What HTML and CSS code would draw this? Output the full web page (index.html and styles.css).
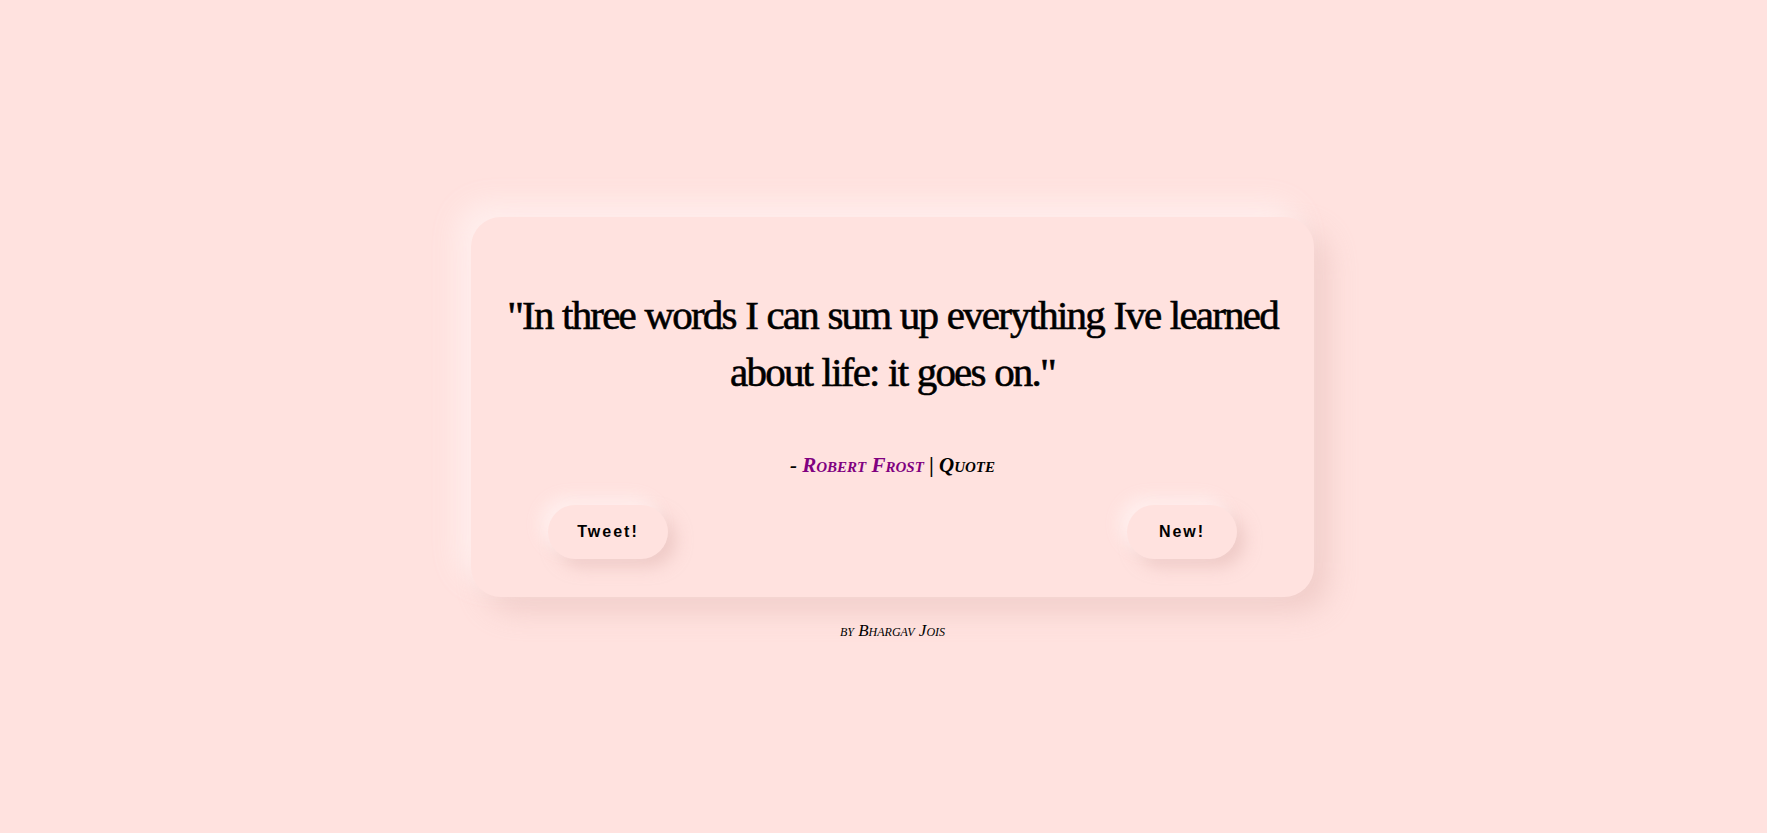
FILE: index.html
```html
<!DOCTYPE html>
<html lang="en">
<head>
<meta charset="utf-8">
<title>Random Quote</title>
<link rel="stylesheet" href="styles.css">
</head>
<body>
<main class="page">
  <section class="card">
    <p class="quote">"In three words I can sum up everything Ive learned about life: it goes on."</p>
    <p class="author">- <span class="author-name">Robert Frost</span> | Quote</p>
    <div class="actions">
      <button class="btn btn-tweet">Tweet!</button>
      <button class="btn btn-new">New!</button>
    </div>
  </section>
  <p class="byline">by Bhargav Jois</p>
</main>
</body>
</html>
```

FILE: styles.css
```css
html, body {
  margin: 0;
  padding: 0;
}

body {
  background: #ffe2df;
  color: #000;
  font-family: "Liberation Serif", "Times New Roman", serif;
  min-height: 100vh;
}

.page {
  display: flex;
  flex-direction: column;
  align-items: center;
  padding-top: 217px;
  padding-left: 18px;
}

.card {
  box-sizing: border-box;
  width: 843px;
  height: 380px;
  border-radius: 30px;
  background: #ffe2df;
  box-shadow: -14px -14px 28px rgba(255, 240, 238, 0.9),
              14px 14px 28px rgba(224, 180, 176, 0.45);
  display: flex;
  flex-direction: column;
  align-items: center;
  padding: 70px 20px 38px;
}

.quote {
  margin: 0;
  max-width: 795px;
  font-size: 41px;
  line-height: 57px;
  text-align: center;
  letter-spacing: -1.8px;
  word-spacing: 1px;
  -webkit-text-stroke: 0.6px #000;
}

.author {
  margin: 52px 0 0;
  font-size: 21px;
  font-weight: bold;
  font-style: italic;
  font-variant: small-caps;
}

.author-name {
  color: #800080;
}

.actions {
  margin-top: auto;
  align-self: stretch;
  display: flex;
  justify-content: space-between;
  padding: 0 57px;
}

.btn {
  height: 54px;
  border: none;
  border-radius: 27px;
  background: #ffe2df;
  font-family: "Liberation Sans", Arial, sans-serif;
  font-weight: bold;
  font-size: 16px;
  letter-spacing: 2px;
  color: #000;
  box-shadow: -8px -8px 16px rgba(255, 240, 238, 0.9),
              8px 8px 16px rgba(224, 180, 176, 0.5);
}

.btn-tweet {
  width: 120px;
}

.btn-new {
  width: 110px;
}

.byline {
  margin: 24px 0 0;
  font-size: 17px;
  font-style: italic;
  font-variant: small-caps;
}
```
